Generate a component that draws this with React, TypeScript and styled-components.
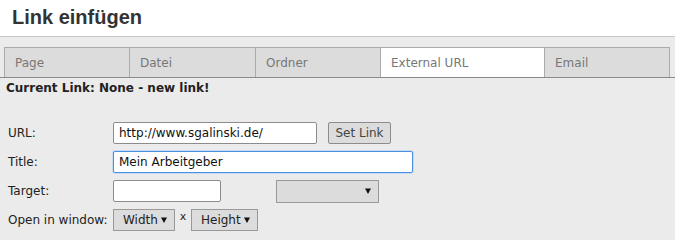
import React, { useState } from 'react';
import styled, { createGlobalStyle } from 'styled-components';

const GlobalStyle = createGlobalStyle`
  html, body {
    margin: 0;
    padding: 0;
    background: #ebebeb;
    font-family: 'DejaVu Sans', Verdana, sans-serif;
    font-size: 12px;
    color: #222;
  }
`;

const Header = styled.header`
  background: #fff;
  height: 36px;
  border-bottom: 1px solid #c8c8c8;
  box-sizing: content-box;
  padding-left: 12px;
  display: flex;
  align-items: center;
`;

const Heading = styled.h1`
  margin: 0;
  font-family: 'Liberation Sans', Arial, sans-serif;
  font-size: 20px;
  font-weight: bold;
  color: #333;
  line-height: 1;
  position: relative;
  top: -1px;
`;

const TabBar = styled.nav`
  display: flex;
  padding: 10px 0 0 4px;
  border-bottom: 1px solid #8a8a8a;
`;

const Tab = styled.div<{ $active?: boolean; $first?: boolean; $width: number }>`
  width: ${p => p.$width}px;
  height: 30px;
  box-sizing: border-box;
  border: 1px solid #aaa;
  border-bottom: none;
  border-left: ${p => (p.$first ? '1px solid #aaa' : 'none')};
  background: ${p => (p.$active ? '#fff' : '#dcdcdc')};
  color: #777;
  padding: 1px 0 0 10px;
  display: flex;
  align-items: center;
  font-size: 12px;
  cursor: pointer;
`;

const CurrentLink = styled.div`
  font-weight: bold;
  padding: 2px 0 0 6px;
  height: 17px;
  line-height: 17px;
`;

const Form = styled.form`
  margin: 0;
  padding: 25px 0 0 8px;
  display: flex;
  flex-direction: column;
  gap: 7px;
`;

const Row = styled.div`
  display: flex;
  align-items: center;
  height: 22px;
`;

const Label = styled.label`
  width: 105px;
  color: #222;
`;

const TextInput = styled.input<{ $width: number; $focused?: boolean }>`
  width: ${p => p.$width}px;
  height: 22px;
  box-sizing: border-box;
  border: 1px solid ${p => (p.$focused ? '#4a90e2' : '#8c8c8c')};
  border-radius: 2px;
  box-shadow: ${p => (p.$focused ? '0 0 0 1px #c7dcf2' : 'none')};
  background: #fff;
  padding: 0 5px;
  font-family: 'DejaVu Sans', Verdana, sans-serif;
  font-size: 12px;
  color: #111;
  outline: none;
`;

const Button = styled.button`
  margin-left: 11px;
  height: 22px;
  width: 63px;
  box-sizing: border-box;
  border: 1px solid #8c8c8c;
  border-radius: 2px;
  background: #dcdcdc;
  font-family: 'DejaVu Sans', Verdana, sans-serif;
  font-size: 12px;
  color: #444;
  padding: 0;
`;

const Select = styled.div<{ $width: number; $height?: number; $offset?: number }>`
  width: ${p => p.$width}px;
  height: ${p => p.$height ?? 22}px;
  margin-left: ${p => p.$offset ?? 0}px;
  box-sizing: border-box;
  border: 1px solid #999;
  background: #dcdcdc;
  display: flex;
  align-items: center;
  justify-content: space-between;
  padding: 0 7px 0 9px;
  color: #222;
  font-size: 12px;
`;

const Arrow = styled.svg`
  width: 6px;
  height: 6px;
  flex-shrink: 0;
`;

const Caret = () => (
  <Arrow viewBox="0 0 6 6">
    <path d="M0 0.5 H6 L3 6 Z" fill="#111" />
  </Arrow>
);

const Times = styled.span`
  width: 16px;
  text-align: center;
  font-size: 11px;
  position: relative;
  top: -4px;
`;

const tabs = [
  { name: 'Page', width: 126 },
  { name: 'Datei', width: 126 },
  { name: 'Ordner', width: 125 },
  { name: 'External URL', width: 164 },
  { name: 'Email', width: 125 },
];

export default function App() {
  const [active, setActive] = useState('External URL');
  const [url, setUrl] = useState('http://www.sgalinski.de/');
  const [title, setTitle] = useState('Mein Arbeitgeber');

  return (
    <>
      <GlobalStyle />
      <Header>
        <Heading>Link einfügen</Heading>
      </Header>
      <TabBar>
        {tabs.map((t, i) => (
          <Tab
            key={t.name}
            $width={t.width}
            $first={i === 0}
            $active={t.name === active}
            onClick={() => setActive(t.name)}
          >
            {t.name}
          </Tab>
        ))}
      </TabBar>
      <CurrentLink>Current Link: None - new link!</CurrentLink>
      <Form onSubmit={e => e.preventDefault()}>
        <Row>
          <Label>URL:</Label>
          <TextInput $width={204} value={url} onChange={e => setUrl(e.target.value)} />
          <Button type="button">Set Link</Button>
        </Row>
        <Row>
          <Label>Title:</Label>
          <TextInput $width={300} $focused value={title} onChange={e => setTitle(e.target.value)} />
        </Row>
        <Row>
          <Label>Target:</Label>
          <TextInput $width={108} defaultValue="" />
          <Select $width={103} $height={23} $offset={55}>
            <span />
            <Caret />
          </Select>
        </Row>
        <Row>
          <Label>Open in window:</Label>
          <Select $width={62} $height={22}>
            Width<Caret />
          </Select>
          <Times>x</Times>
          <Select $width={67} $height={22}>
            Height<Caret />
          </Select>
        </Row>
      </Form>
    </>
  );
}
